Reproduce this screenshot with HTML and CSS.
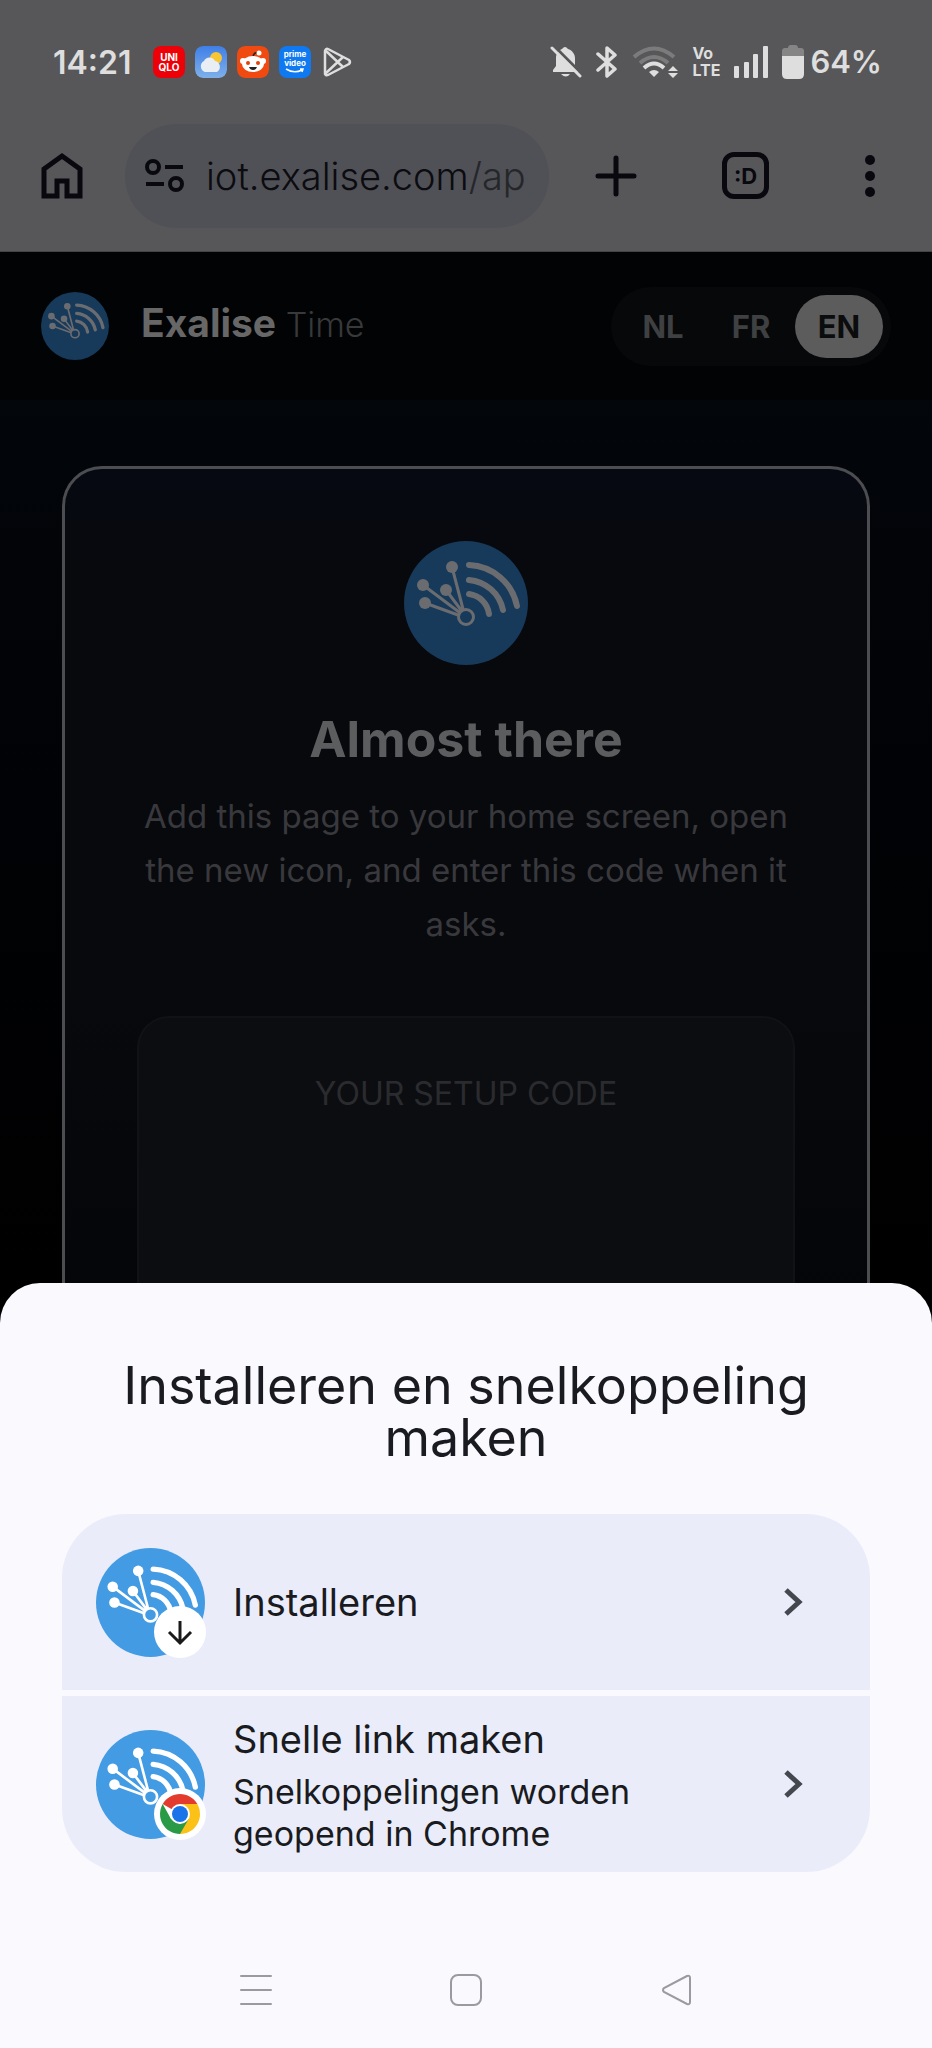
FILE: index.html
```html
<!DOCTYPE html>
<html lang="nl">
<head>
    <meta charset="UTF-8">
    <meta name="viewport" content="width=device-width, initial-scale=1.0">
    <title>Exalise Time</title>
    <link rel="stylesheet" href="styles.css">
</head>
<body>
    <!-- Shared logo -->
    <svg class="sprite" aria-hidden="true">
        <symbol id="logo" viewBox="0 0 124 124">
            <circle fill="var(--logo-bg)" cx="62" cy="62" r="62"/>
            <g fill="none" stroke="currentColor" stroke-linecap="round">
                <path stroke-width="3" d="M48 26 59 68M19 44l36 27M21 62l33 12M42 49l15 20"/>
                <circle cx="62" cy="76" r="7.500" stroke-width="3"/>
                <path stroke-width="6" d="M65 24a51 51 0 0 1 48 41M65 39a38 38 0 0 1 34 30M65 53a23 23 0 0 1 20 20"/>
            </g>
            <g fill="currentColor">
                <circle cx="48" cy="26" r="6"/>
                <circle cx="19" cy="44" r="6"/>
                <circle cx="21" cy="62" r="6"/>
                <circle cx="42" cy="49" r="6"/>
            </g>
        </symbol>
    </svg>

    <!-- Phone status bar -->
    <div class="status-bar">
        <span class="clock">14:21</span>
        <div class="notifications">
            <span class="app-icon uniqlo">UNI<br>QLO</span>
            <svg class="app-icon" viewBox="0 0 32 32">
                <defs>
                    <linearGradient id="sky" x2="0" y2="1"><stop stop-color="#3f7fe8"/><stop offset="1" stop-color="#7fb0ea"/></linearGradient>
                </defs>
                <rect width="32" height="32" rx="8" fill="url(#sky)"/>
                <circle cx="21" cy="12" r="6" fill="#f6c634"/>
                <path d="M10 26a6 6 0 0 1-1-11 6 6 0 0 1 11 0 6 6 0 0 1 2 11z" fill="#e9eef4"/>
            </svg>
            <svg class="app-icon" viewBox="0 0 32 32">
                <rect width="32" height="32" rx="8" fill="#f04a10"/>
                <path d="M16 12c0-4 2-6 5-5" fill="none" stroke="#222" stroke-width="1.500"/>
                <circle cx="22" cy="7" r="2.500" fill="#fff"/>
                <circle cx="6" cy="15" r="3" fill="#fff"/>
                <circle cx="26" cy="15" r="3" fill="#fff"/>
                <ellipse cx="16" cy="18" rx="11" ry="8" fill="#fff"/>
                <circle cx="11" cy="17" r="2" fill="#e0430e"/>
                <circle cx="21" cy="17" r="2" fill="#e0430e"/>
                <path d="M12 21h8q-1 3-4 3t-4-3" fill="#222"/>
            </svg>
            <span class="app-icon prime">prime<br>video
                <svg viewBox="0 0 20 5"><path d="M1 1q8 5 16 1M15 1h3l-1 3" fill="none" stroke="#fff" stroke-width="1.500"/></svg>
            </span>
            <svg class="app-icon" viewBox="0 0 32 32" fill="none" stroke="#dedede" stroke-width="2.500" stroke-linejoin="round">
                <path d="M4 5v23q1 2 3 1l21-11q2-2 0-4L7 3Q5 2 4 5zM4 4l18 17M4 28l18-17"/>
            </svg>
        </div>
        <div class="indicators">
            <svg width="32" height="32" viewBox="0 0 32 32">
                <path d="M3 26v-2l3-4v-8c0-5 3-8 6-9q3-4 6 0c4 1 7 5 7 9v8l3 4v2z" fill="#dedede"/>
                <path d="M11 28h9q-4 5-9 0" fill="#dedede"/>
                <path d="M4 0l28 28" stroke="#575759" stroke-width="3"/>
                <path d="M2 2l28 28" stroke="#dedede" stroke-width="3" stroke-linecap="round"/>
            </svg>
            <svg width="22" height="32" viewBox="0 0 22 32" fill="none" stroke="#dedede" stroke-width="3.500" stroke-linejoin="round" stroke-linecap="round">
                <path d="M2 8l17 15-8 7V2l8 7L2 24"/>
            </svg>
            <svg width="46" height="32" viewBox="0 0 46 32" fill="none" stroke-width="4">
                <path d="M2 11q20-17 40 0M8 17q14-12 28 0" stroke="#7b7b7c"/>
                <path d="M12 22q10-9 20 0" stroke="#dedede"/>
                <path d="M17 26q5-4 10 0l-5 5z" fill="#dedede"/>
                <path d="M36 25l5-5 5 5zM36 27l5 5 5-5z" fill="#dedede"/>
            </svg>
            <div class="volte"><span>Vo</span><span>LTE</span></div>
            <svg width="34" height="32" viewBox="0 0 34 32" fill="#dedede">
                <rect x="0" y="20" width="5" height="12" rx="1"/>
                <rect x="10" y="16" width="5" height="16" rx="1"/>
                <rect x="19" y="8" width="5" height="24" rx="1"/>
                <rect x="29" y="0" width="5" height="32" rx="1"/>
            </svg>
            <div class="battery">
                <svg width="22" height="34" viewBox="0 0 22 34">
                    <path d="M0 12V6q0-3 3-3h3q0-3 3-3h4q3 0 3 3h3q3 0 3 3v6z" fill="#858586"/>
                    <path d="M0 11h22v18q0 5-5 5H5q-5 0-5-5z" fill="#dedede"/>
                </svg>
                <span>64%</span>
            </div>
        </div>
    </div>

    <!-- Browser toolbar -->
    <div class="toolbar">
        <button class="icon-btn" aria-label="Home">
            <svg width="42" height="48" viewBox="0 0 42 48" fill="none" stroke="currentColor" stroke-width="5">
                <path d="M3 17 21 4l18 13v27H26V29H16v15H3z"/>
            </svg>
        </button>
        <div class="address-bar">
            <svg width="39" height="33" viewBox="0 0 39 33" fill="none" stroke="currentColor" stroke-width="4">
                <circle cx="8" cy="8" r="6"/>
                <path d="M20 8h18M1 25h18"/>
                <circle cx="31" cy="25" r="6"/>
            </svg>
            <a class="url" href="#">iot.exalise.com<span>/ap</span></a>
        </div>
        <div class="toolbar-actions">
            <button class="icon-btn" aria-label="New tab">
                <svg width="42" height="42" viewBox="0 0 42 42" stroke="currentColor" stroke-width="5" stroke-linecap="round">
                    <path d="M21 3v36M3 21h36"/>
                </svg>
            </button>
            <button class="icon-btn tabs">:D</button>
            <button class="icon-btn" aria-label="Menu">
                <svg width="32" height="42" viewBox="0 0 32 42" fill="currentColor">
                    <circle cx="16" cy="5" r="5"/>
                    <circle cx="16" cy="21" r="5"/>
                    <circle cx="16" cy="37" r="5"/>
                </svg>
            </button>
        </div>
    </div>

    <!-- Page behind the sheet -->
    <div class="page">
        <header class="site-header">
            <svg class="logo logo-small dim"><use href="#logo"/></svg>
            <div class="brand"><strong>Exalise</strong> <span>Time</span></div>
            <nav class="languages">
                <button>NL</button>
                <button>FR</button>
                <button class="active">EN</button>
            </nav>
        </header>
        <main class="content">
            <section class="card">
                <svg class="logo logo-large dim"><use href="#logo"/></svg>
                <h1>Almost there</h1>
                <p>Add this page to your home screen, open the new icon, and enter this code when it asks.</p>
                <div class="code-box">YOUR SETUP CODE</div>
            </section>
        </main>
    </div>

    <!-- Bottom sheet -->
    <div class="sheet" role="dialog" aria-labelledby="sheet-title">
        <h2 id="sheet-title">Installeren en snelkoppeling maken</h2>
        <div class="options">
            <button class="option">
                <span class="option-icon">
                    <svg class="logo"><use href="#logo"/></svg>
                    <svg class="badge" viewBox="0 0 52 52">
                        <circle cx="26" cy="26" r="26" fill="#fff"/>
                        <path d="M26 15v21M15 26l11 11 11-11" fill="none" stroke="#1a1a1a" stroke-width="3"/>
                    </svg>
                </span>
                <span class="option-text">
                    <span class="option-title">Installeren</span>
                </span>
                <svg class="chevron" viewBox="0 0 20 30"><path d="M3 3l13 12L3 27"/></svg>
            </button>
            <button class="option">
                <span class="option-icon">
                    <svg class="logo"><use href="#logo"/></svg>
                    <svg class="badge" viewBox="0 0 52 52">
                        <circle cx="26" cy="26" r="26" fill="#fff"/>
                        <path d="M26 26 8.700 16a20 20 0 0 1 34.600 0z" fill="#e33b2e"/>
                        <path d="M26 26V16h17.300A20 20 0 0 1 26 46z" fill="#fbc116"/>
                        <path d="M8.700 16 17 31l9 5 8.700-5L26 46A20 20 0 0 1 8.700 16z" fill="#2a9a47"/>
                        <circle cx="26" cy="26" r="10" fill="#fff"/>
                        <circle cx="26" cy="26" r="8" fill="#1a73e8"/>
                    </svg>
                </span>
                <span class="option-text">
                    <span class="option-title">Snelle link maken</span>
                    <span class="option-note">Snelkoppelingen worden geopend in Chrome</span>
                </span>
                <svg class="chevron" viewBox="0 0 20 30"><path d="M3 3l13 12L3 27"/></svg>
            </button>
        </div>

        <nav class="system-nav">
            <button aria-label="Recent">
                <svg viewBox="0 0 32 32"><path d="M1 2h30M1 16h30M1 30h30"/></svg>
            </button>
            <button aria-label="Home">
                <svg viewBox="0 0 32 32"><rect x="1" y="1" width="30" height="30" rx="7"/></svg>
            </button>
            <button aria-label="Back">
                <svg viewBox="0 0 32 32"><path d="M27 2 4 14q-2 2 0 4l23 12q3 1 3-2V4q0-3-3-2z"/></svg>
            </button>
        </nav>
    </div>
</body>
</html>
```

FILE: styles.css
```css
/* styles.css */

* {
    box-sizing: border-box;
}

body {
    margin: 0;
    height: 100vh;
    display: flex;
    flex-direction: column;
    background: #000102;
    font-family: Inter, "Liberation Sans", sans-serif;
}

button {
    border: none;
    background: none;
    padding: 0;
    font-family: inherit;
    color: inherit;
    cursor: pointer;
}

svg {
    display: block;
    flex: none;
}

.sprite {
    position: absolute;
    width: 0;
    height: 0;
}

/* Status bar */

.status-bar {
    display: flex;
    align-items: center;
    padding: 44px 50px 12px 53px;
    height: 92px;
    background: #575759;
    color: #dedede;
}

.clock {
    width: 100px;
    font-size: 32px;
    font-weight: 600;
}

.notifications {
    display: flex;
    gap: 10px;
}

.app-icon {
    width: 32px;
    height: 32px;
    border-radius: 8px;
    text-align: center;
    color: #fff;
}

.uniqlo {
    padding-top: 6px;
    background: #ed0008;
    font-size: 10px;
    line-height: 10px;
    font-weight: 700;
}

.prime {
    padding-top: 4px;
    background: #0f79f2;
    font-size: 8px;
    line-height: 9px;
    font-weight: 700;
}

.prime svg {
    width: 20px;
    height: 5px;
    margin: 0 auto;
}

.indicators {
    display: flex;
    align-items: center;
    gap: 14px;
    margin-left: auto;
}

.volte {
    display: flex;
    flex-direction: column;
    font-size: 16px;
    line-height: 17px;
    font-weight: 700;
}

.battery {
    display: flex;
    align-items: center;
    gap: 6px;
    font-size: 31px;
    line-height: 32px;
    font-weight: 600;
}

/* Browser toolbar */

.toolbar {
    display: flex;
    align-items: center;
    gap: 42px;
    height: 160px;
    padding: 8px 46px 0 41px;
    background: #575759;
    border-bottom: 1px solid #424345;
    color: #08080e;
}

.address-bar {
    display: flex;
    align-items: center;
    flex: 1;
    gap: 22px;
    min-width: 0;
    height: 104px;
    padding: 0 20px;
    border-radius: 52px;
    background: #505156;
}

.url {
    flex: 1;
    font-size: 38px;
    line-height: 52px;
    font-weight: 300;
    white-space: nowrap;
    text-decoration: none;
    color: #0b0b10;
}

.url span {
    color: #25262a;
}

.toolbar-actions {
    display: flex;
    align-items: center;
    gap: 85px;
    margin-left: 4px;
}

.tabs {
    width: 47px;
    height: 47px;
    border: 5px solid #08080e;
    border-radius: 12px;
    font-size: 22px;
    font-weight: 700;
}

/* Page */

.page {
    display: flex;
    flex-direction: column;
    flex: 1;
    min-height: 0;
    overflow: hidden;
    background: linear-gradient(#03070c, #010205 50%, #000);
}

.site-header {
    display: flex;
    align-items: center;
    height: 148px;
    flex: none;
    padding: 0 41px;
    background: #020304;
}

.logo {
    --logo-bg: #439be3;
    width: 109px;
    height: 109px;
    color: #fff;
}

.dim {
    --logo-bg: #17395a;
    color: #6b6c70;
}

.logo-small {
    width: 68px;
    height: 68px;
}

.logo-large {
    width: 124px;
    height: 124px;
}

.brand {
    margin-left: 32px;
    padding-bottom: 8px;
    color: #38393b;
    font-size: 34px;
    font-weight: 300;
}

.brand strong {
    font-size: 39px;
    font-weight: 700;
    color: #676767;
}

.languages {
    display: flex;
    margin-left: auto;
    padding: 8px;
    border-radius: 40px;
    background: #07080a;
}

.languages button {
    width: 88px;
    height: 63px;
    border-radius: 32px;
    color: #3f4042;
    font-size: 31px;
    font-weight: 700;
}

.languages .active {
    background: #5c5c5c;
    color: #0b0c0e;
}

.content {
    display: flex;
    flex: 1;
    padding: 66px 62px 0;
}

.card {
    display: flex;
    flex-direction: column;
    align-items: center;
    flex: 1;
    padding: 72px 72px 0;
    border: 3px solid #4c4d50;
    border-bottom: none;
    border-radius: 40px 40px 0 0;
    background: linear-gradient(#060912, #08090d 100px, #08090d 60%, #040508);
    text-align: center;
}

.card h1 {
    margin: 42px 0 18px;
    color: #5c5d5f;
    font-size: 50px;
    line-height: 64px;
    font-weight: 700;
}

.card p {
    margin: 0 0 65px;
    color: #39393d;
    font-size: 33px;
    line-height: 54px;
}

.code-box {
    flex: 1;
    align-self: stretch;
    padding-top: 56px;
    border: 2px solid #111215;
    border-bottom: none;
    border-radius: 32px 32px 0 0;
    background: #0c0d11;
    color: #2a2b2e;
    font-size: 32px;
    line-height: 40px;
}

/* Bottom sheet */

.sheet {
    position: relative;
    margin-top: -40px;
    padding: 77px 62px 42px;
    border-radius: 40px 40px 0 0;
    background: #f9f9fe;
    color: #1a1b21;
}

.sheet h2 {
    margin: 0 0 50px;
    font-size: 52px;
    line-height: 52px;
    font-weight: 400;
    text-align: center;
}

.options {
    display: flex;
    flex-direction: column;
    gap: 6px;
    overflow: hidden;
    border-radius: 64px;
}

.option {
    display: flex;
    align-items: center;
    gap: 28px;
    min-height: 176px;
    padding: 12px 67px 12px 34px;
    background: #eaedf9;
    text-align: left;
}

.option-icon {
    position: relative;
}

.badge {
    position: absolute;
    right: -1px;
    bottom: -1px;
    width: 52px;
    height: 52px;
}

.option-text {
    flex: 1;
    max-width: 440px;
}

.option-title,
.option-note {
    display: block;
}

.option-title {
    font-size: 38px;
    line-height: 52px;
}

.option-note {
    margin-top: 6px;
    font-size: 34px;
    line-height: 42px;
}

.chevron {
    width: 20px;
    height: 30px;
    margin-left: auto;
    fill: none;
    stroke: #45474f;
    stroke-width: 5;
}

.system-nav {
    display: flex;
    justify-content: center;
    gap: 178px;
    margin-top: 102px;
}

.system-nav svg {
    width: 32px;
    height: 32px;
    fill: none;
    stroke: #9b9aa1;
    stroke-width: 2;
    stroke-linecap: round;
}
```
